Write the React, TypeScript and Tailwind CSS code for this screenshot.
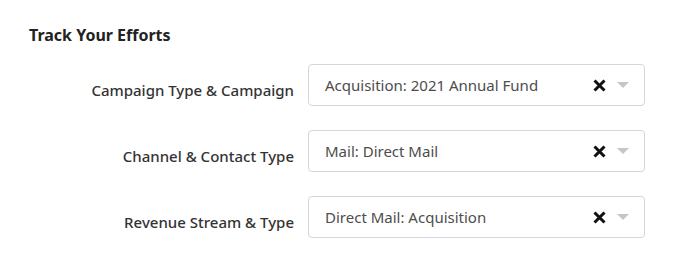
import React from 'react';

const rows = [
  { label: 'Campaign Type & Campaign', value: 'Acquisition: 2021 Annual Fund' },
  { label: 'Channel & Contact Type', value: 'Mail: Direct Mail' },
  { label: 'Revenue Stream & Type', value: 'Direct Mail: Acquisition' },
];

function SelectBox({ value }: { value: string }) {
  return (
    <div className="flex h-[42px] w-[337px] items-center rounded border border-[#d3d6da] bg-white pl-[16px] pr-[15px]">
      <span className="grow text-[15px] text-[#4d4d4d]">{value}</span>
      <svg width="13" height="13" viewBox="0 0 13 13" className="mr-[11px]">
        <path d="M1.5 1.5 L11.5 11.5 M11.5 1.5 L1.5 11.5" stroke="#111" strokeWidth="3" />
      </svg>
      <svg width="12" height="6" viewBox="0 0 12 6">
        <path d="M0 0 L12 0 L6 6 Z" fill="#c4c6c9" />
      </svg>
    </div>
  );
}

export default function App() {
  return (
    <div className="h-[271px] w-[680px] bg-white pl-[29px] pt-[24px]" style={{ fontFamily: '"Noto Sans", sans-serif' }}>
      <h2 className="text-[16px] font-bold leading-[22px] text-[#222]">Track Your Efforts</h2>
      <div className="mt-[18px] flex flex-col gap-[24px]">
        {rows.map(r => (
          <div key={r.label} className="flex items-center">
            <div className="w-[279px] pr-[14px] pt-[10px] text-right text-[15px] font-medium text-[#333]">{r.label}</div>
            <SelectBox value={r.value} />
          </div>
        ))}
      </div>
    </div>
  );
}
